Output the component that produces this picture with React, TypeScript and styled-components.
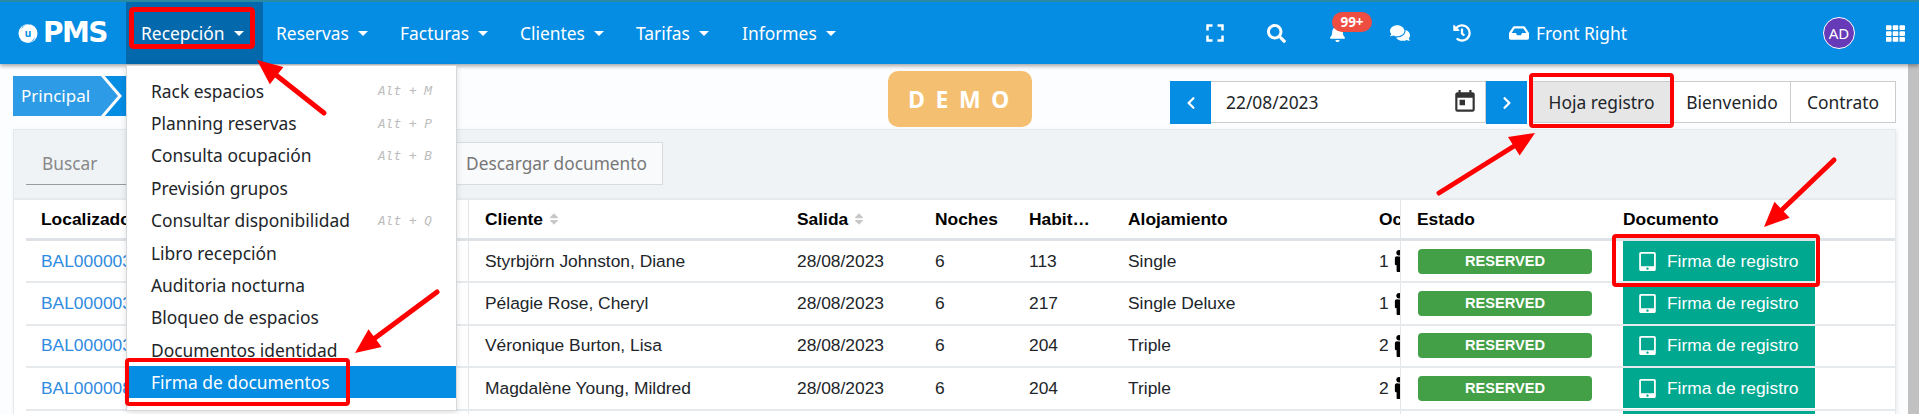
import React from "react";
import styled, { createGlobalStyle } from "styled-components";
import {
  FaSearch,
  FaBell,
  FaComments,
  FaHistory,
  FaInbox,
  FaTh,
  FaTabletAlt,
  FaMale,
  FaSort,
  FaChevronLeft,
  FaChevronRight,
} from "react-icons/fa";
import { MdFullscreen, MdToday } from "react-icons/md";

const Global = createGlobalStyle`
  html, body { margin: 0; padding: 0; height: 414px; overflow: hidden; background: #fcfdff; }
  * { box-sizing: border-box; }
`;

const Page = styled.div`
  position: relative;
  width: 1919px;
  height: 414px;
  overflow: hidden;
  display: flex;
  flex-direction: column;
  font-family: "Noto Sans", "Open Sans", sans-serif;
  border-top: 2px solid #2b8aa3;
`;

const Nav = styled.header`
  position: relative;
  z-index: 5;
  flex: none;
  height: 62px;
  display: flex;
  align-items: stretch;
  background: #058ce3;
  color: #fff;
  box-shadow: 0 2px 4px rgba(0, 0, 0, 0.35);
`;

const Logo = styled.div`
  width: 126px;
  padding-left: 18px;
  display: flex;
  align-items: center;
  gap: 5px;
`;

const LogoText = styled.span`
  font-family: "DejaVu Sans", sans-serif;
  font-weight: 700;
  font-size: 28px;
  letter-spacing: -1.6px;
  line-height: 1;
`;

const NavItem = styled.div<{ $active?: boolean; $width: number }>`
  position: relative;
  width: ${(p) => p.$width}px;
  padding-left: ${(p) => (p.$active ? 15 : 13)}px;
  display: flex;
  align-items: center;
  gap: 9px;
  font-size: 17.4px;
  background: ${(p) => (p.$active ? "#0468ad" : "transparent")};
`;

const Caret = styled.i`
  width: 0;
  height: 0;
  border-left: 5px solid transparent;
  border-right: 5px solid transparent;
  border-top: 5px solid #fff;
`;

const Menu = styled.ul`
  position: absolute;
  top: 100%;
  left: 0;
  width: 331px;
  height: 346px;
  margin: 1px 0 0;
  padding: 8.5px 0 0;
  list-style: none;
  background: #fff;
  color: #212529;
  border: 1px solid #d5d8da;
  box-shadow: 0 2px 6px rgba(0, 0, 0, 0.12);
`;

const MenuItem = styled.li<{ $active?: boolean }>`
  height: 32.4px;
  padding: 0 24px;
  display: flex;
  align-items: center;
  justify-content: space-between;
  font-size: 17.4px;
  white-space: nowrap;
  background: ${(p) => (p.$active ? "#058ce3" : "transparent")};
  color: ${(p) => (p.$active ? "#fff" : "#212529")};
`;

const Shortcut = styled.span`
  font-family: "DejaVu Sans Mono", monospace;
  font-style: italic;
  font-size: 12.8px;
  color: #bdbdbd;
`;

const NavIcons = styled.div`
  position: absolute;
  top: 0;
  left: 1200px;
  height: 62px;
  display: flex;
  align-items: center;
`;

const NavIcon = styled.span<{ $w: number }>`
  position: relative;
  width: ${(p) => p.$w}px;
  display: flex;
  align-items: center;
  font-size: 19px;
`;

const Badge = styled.span`
  position: absolute;
  left: 3px;
  top: -13px;
  width: 40px;
  height: 20px;
  border-radius: 10px;
  background: #ee4e42;
  font-size: 13.5px;
  font-weight: 700;
  line-height: 20px;
  text-align: center;
`;

const FrontRight = styled.span`
  display: flex;
  align-items: center;
  gap: 7px;
  font-size: 17.4px;
  width: 314px;
`;

const Avatar = styled.span`
  width: 32px;
  height: 32px;
  border-radius: 50%;
  border: 1.5px solid #fff;
  background: #673ab7;
  font-size: 15px;
  display: flex;
  align-items: center;
  justify-content: center;
  margin-right: 31px;
  flex: none;
`;

const Body = styled.div`
  flex: 1;
  display: flex;
  min-height: 0;
`;

const Main = styled.main`
  width: 1908px;
  padding: 0 12px 0 13px;
  display: flex;
  flex-direction: column;
`;

const Scrollbar = styled.div`
  width: 11px;
  background: #c1c1c1;
`;

const TopRow = styled.div`
  flex: none;
  height: 65px;
  display: flex;
  align-items: flex-start;
`;

const Crumb = styled.div`
  position: relative;
  margin-top: 12px;
  width: 113px;
  height: 40px;
  background: #058ce3;
  overflow: hidden;
`;

const CrumbLabel = styled.div`
  width: 88px;
  height: 40px;
  padding-left: 8px;
  background: #2e9be6;
  color: #fff;
  font-size: 17px;
  line-height: 39px;
`;

const CrumbChevron = styled.svg`
  position: absolute;
  left: 86px;
  top: 0;
`;

const Demo = styled.div`
  margin: 7px 0 0 762px;
  width: 144px;
  height: 56px;
  border-radius: 10px;
  background: #f4bf70;
  color: #fff;
  font-family: "Open Sans", sans-serif;
  font-weight: 700;
  font-size: 23px;
  letter-spacing: 10.5px;
  line-height: 56px;
  padding-left: 20px;
  white-space: nowrap;
`;

const DateGroup = styled.div`
  margin: 17px 0 0 138px;
  display: flex;
  align-items: flex-start;
`;

const DateButton = styled.button`
  width: 41px;
  height: 43px;
  border: 0;
  padding: 0;
  background: #058ce3;
  color: #fff;
  font-size: 14px;
  display: flex;
  align-items: center;
  justify-content: center;
`;

const DateField = styled.div`
  width: 275px;
  height: 42px;
  padding: 0 7px 0 15px;
  display: flex;
  align-items: center;
  justify-content: space-between;
  background: #fff;
  border: 1px solid #ccc;
  border-left: 0;
  font-size: 17.4px;
  color: #212529;
`;

const DocTab = styled.div<{ $w: number; $active?: boolean; $ml?: number }>`
  width: ${(p) => p.$w}px;
  margin-left: ${(p) => p.$ml ?? 0}px;
  height: 42px;
  display: flex;
  align-items: center;
  justify-content: center;
  font-size: 17.4px;
  color: #212529;
  background: ${(p) => (p.$active ? "#e6e6e6" : "#fff")};
  border: 1px solid #ccc;
  border-left-width: ${(p) => (p.$active ? 1 : 0)}px;
`;

const Panel = styled.section`
  flex: 1;
  min-height: 0;
  background: #fff;
  border: 1px solid #e6e9ec;
  border-bottom: 0;
  box-shadow: 1px 1px 4px rgba(0, 0, 0, 0.08);
  display: flex;
  flex-direction: column;
`;

const Toolbar = styled.div`
  flex: none;
  height: 70px;
  padding: 12px 0 0 12px;
  display: flex;
  align-items: flex-start;
  background: #eff3f6;
  border-bottom: 2px solid #e6eaed;
`;

const SearchBox = styled.div`
  width: 400px;
  height: 43px;
  padding-left: 16px;
  display: flex;
  align-items: center;
  border-bottom: 1px solid #9a9a9a;
  color: #888;
  font-size: 17.3px;
`;

const DownloadButton = styled.div`
  margin-left: 24px;
  width: 213px;
  height: 43px;
  display: flex;
  align-items: center;
  justify-content: center;
  border: 1px solid #d8dcde;
  background: #f9fafb;
  color: #777;
  font-size: 17.3px;
`;

const Table = styled.div`
  padding-left: 12px;
  font-family: "Liberation Sans", Arial, sans-serif;
  font-size: 17.4px;
  color: #212529;
`;

const TEMPLATE = "443px 312px 138px 94px 99px 251px 38px 207px 274px";

const HeadRow = styled.div`
  display: grid;
  grid-template-columns: ${TEMPLATE};
  height: 41px;
  border-bottom: 3px solid #dee2e6;
  font-weight: 700;
  color: #000;
`;

const Row = styled.div`
  display: grid;
  grid-template-columns: ${TEMPLATE};
  height: 42.4px;
  border-bottom: 2px solid #e7eaed;
`;

const Cell = styled.div<{ $edge?: boolean; $pad?: number }>`
  display: flex;
  align-items: center;
  gap: 4px;
  padding-left: ${(p) => p.$pad ?? 16}px;
  overflow: hidden;
  white-space: nowrap;
  border-right: ${(p) => (p.$edge ? "1px solid #e3e6e9" : "0")};
`;

const SortIcon = styled(FaSort)`
  color: #c8c8c8;
  font-size: 14px;
`;

const LinkText = styled.a`
  color: #2f8be0;
`;

const StatusBadge = styled.span`
  width: 174px;
  height: 25px;
  border-radius: 4px;
  background: #43a047;
  color: #fff;
  font-weight: 700;
  font-size: 14.6px;
  text-align: center;
  line-height: 25px;
`;

const SignButton = styled.div`
  width: 192px;
  height: 40px;
  padding-left: 15px;
  display: flex;
  align-items: center;
  gap: 10px;
  background: #00a88f;
  color: #fff;
  font-size: 17.4px;
`;

const PersonIcon = styled(FaMale)`
  flex: none;
  margin-left: -5px;
  color: #000;
`;

const Overlay = styled.svg`
  position: absolute;
  left: 0;
  top: -2px;
  z-index: 10;
  pointer-events: none;
`;

function Arrow({ from, to }: { from: [number, number]; to: [number, number] }) {
  const dx = to[0] - from[0];
  const dy = to[1] - from[1];
  const len = Math.hypot(dx, dy);
  const ux = dx / len;
  const uy = dy / len;
  const bx = to[0] - ux * 25;
  const by = to[1] - uy * 25;
  const hw = 11;
  return (
    <g fill="#f00" stroke="#f00">
      <line x1={from[0]} y1={from[1]} x2={bx} y2={by} strokeWidth={5} strokeLinecap="round" />
      <polygon
        strokeWidth={0}
        points={`${to[0]},${to[1]} ${bx - uy * hw},${by + ux * hw} ${bx + uy * hw},${by - ux * hw}`}
      />
    </g>
  );
}

function RedBox({ x, y, w, h, b }: { x: number; y: number; w: number; h: number; b: number }) {
  return (
    <rect
      x={x + b / 2}
      y={y + b / 2}
      width={w - b}
      height={h - b}
      rx={2}
      fill="none"
      stroke="#f00"
      strokeWidth={b}
    />
  );
}

const menu: [string, string?][] = [
  ["Rack espacios", "Alt + M"],
  ["Planning reservas", "Alt + P"],
  ["Consulta ocupación", "Alt + B"],
  ["Previsión grupos"],
  ["Consultar disponibilidad", "Alt + Q"],
  ["Libro recepción"],
  ["Auditoria nocturna"],
  ["Bloqueo de espacios"],
  ["Documentos identidad"],
  ["Firma de documentos"],
];

const navItems: [string, number][] = [
  ["Reservas", 124],
  ["Facturas", 120],
  ["Clientes", 116],
  ["Tarifas", 106],
  ["Informes", 120],
];

const rows = [
  ["BAL000003", "Styrbjörn Johnston, Diane", "113", "Single", "1"],
  ["BAL000003", "Pélagie Rose, Cheryl", "217", "Single Deluxe", "1"],
  ["BAL000003", "Véronique Burton, Lisa", "204", "Triple", "2"],
  ["BAL000008", "Magdalène Young, Mildred", "204", "Triple", "2"],
];

export default function App() {
  return (
    <Page>
      <Global />
      <Nav>
        <Logo>
          <svg width="20" height="21" viewBox="0 0 20 21" aria-hidden="true">
            <circle cx="10" cy="10.5" r="9.5" fill="#fff" />
            <path d="M4 4 A9 9 0 0 1 13 1.6 A8 8 0 0 0 3 8 Z" fill="#058ce3" />
            <path d="M16 17 A9 9 0 0 1 7 19.4 A8 8 0 0 0 17 13 Z" fill="#058ce3" />
            <text x="10" y="14" fontSize="10" fontWeight="700" textAnchor="middle" fill="#058ce3">
              u
            </text>
          </svg>
          <LogoText>PMS</LogoText>
        </Logo>
        <NavItem $active $width={137}>
          Recepción <Caret />
          <Menu>
            {menu.map(([label, key], i) => (
              <MenuItem key={label} $active={i === 9}>
                {label}
                {key && <Shortcut>{key}</Shortcut>}
              </MenuItem>
            ))}
          </Menu>
        </NavItem>
        {navItems.map(([label, w]) => (
          <NavItem key={label} $width={w}>
            {label} <Caret />
          </NavItem>
        ))}
        <NavIcons>
          <NavIcon $w={67}>
            <MdFullscreen size={30} />
          </NavIcon>
          <NavIcon $w={62}>
            <FaSearch size={19} />
          </NavIcon>
          <NavIcon $w={61}>
            <FaBell size={17} />
            <Badge>99+</Badge>
          </NavIcon>
          <NavIcon $w={63}>
            <FaComments size={20} />
          </NavIcon>
          <NavIcon $w={56}>
            <FaHistory size={18} />
          </NavIcon>
          <FrontRight>
            <FaInbox size={20} />
            Front Right
          </FrontRight>
          <Avatar>AD</Avatar>
          <FaTh size={19} />
        </NavIcons>
      </Nav>
      <Body>
        <Main>
          <TopRow>
            <Crumb>
              <CrumbLabel>Principal</CrumbLabel>
              <CrumbChevron width="27" height="40" viewBox="0 0 27 40" aria-hidden="true">
                <path d="M0 0 H2 L21 20 L2 40 H0 Z" fill="#2e9be6" />
                <path d="M3 -1 L21 20 L3 41" fill="none" stroke="#fff" strokeWidth="3" />
              </CrumbChevron>
            </Crumb>
            <Demo>DEMO</Demo>
            <DateGroup>
              <DateButton>
                <FaChevronLeft />
              </DateButton>
              <DateField>
                22/08/2023
                <MdToday size={26} color="#333" />
              </DateField>
              <DateButton>
                <FaChevronRight />
              </DateButton>
              <DocTab $w={145} $active $ml={2}>
                Hoja registro
              </DocTab>
              <DocTab $w={117}>Bienvenido</DocTab>
              <DocTab $w={105}>Contrato</DocTab>
            </DateGroup>
          </TopRow>
          <Panel>
            <Toolbar>
              <SearchBox>Buscar</SearchBox>
              <DownloadButton>Descargar documento</DownloadButton>
            </Toolbar>
            <Table>
              <HeadRow>
                <Cell $edge $pad={15}>Localizador</Cell>
                <Cell>
                  Cliente <SortIcon />
                </Cell>
                <Cell>
                  Salida <SortIcon />
                </Cell>
                <Cell>Noches</Cell>
                <Cell>Habit…</Cell>
                <Cell>Alojamiento</Cell>
                <Cell $edge>Oc</Cell>
                <Cell $pad={16}>Estado</Cell>
                <Cell $pad={15}>Documento</Cell>
              </HeadRow>
              {rows.map(([code, client, room, type, occ]) => (
                <Row key={client}>
                  <Cell $edge $pad={15}>
                    <LinkText>{code}</LinkText>
                  </Cell>
                  <Cell>{client}</Cell>
                  <Cell>28/08/2023</Cell>
                  <Cell>6</Cell>
                  <Cell>{room}</Cell>
                  <Cell>{type}</Cell>
                  <Cell $edge>
                    {occ}
                    <PersonIcon size={22} />
                  </Cell>
                  <Cell $pad={17}>
                    <StatusBadge>RESERVED</StatusBadge>
                  </Cell>
                  <Cell $pad={15}>
                    <SignButton>
                      <FaTabletAlt size={19} />
                      Firma de registro
                    </SignButton>
                  </Cell>
                </Row>
              ))}
              <Row>
                <Cell $edge />
                <Cell />
                <Cell />
                <Cell />
                <Cell />
                <Cell />
                <Cell $edge />
                <Cell />
                <Cell $pad={15}>
                  <SignButton />
                </Cell>
              </Row>
            </Table>
          </Panel>
        </Main>
        <Scrollbar />
      </Body>
      <Overlay width="1919" height="414" viewBox="0 0 1919 414" aria-hidden="true">
        <RedBox x={129} y={7} w={126} h={42} b={5} />
        <RedBox x={1529} y={73} w={145} h={55} b={4} />
        <RedBox x={125} y={358} w={225} h={48} b={4} />
        <RedBox x={1612} y={234} w={208} h={53} b={4} />
        <Arrow from={[324, 113]} to={[257, 60]} />
        <Arrow from={[437, 292]} to={[355, 353]} />
        <Arrow from={[1439, 193]} to={[1535, 133]} />
        <Arrow from={[1834, 160]} to={[1764, 227]} />
      </Overlay>
    </Page>
  );
}
